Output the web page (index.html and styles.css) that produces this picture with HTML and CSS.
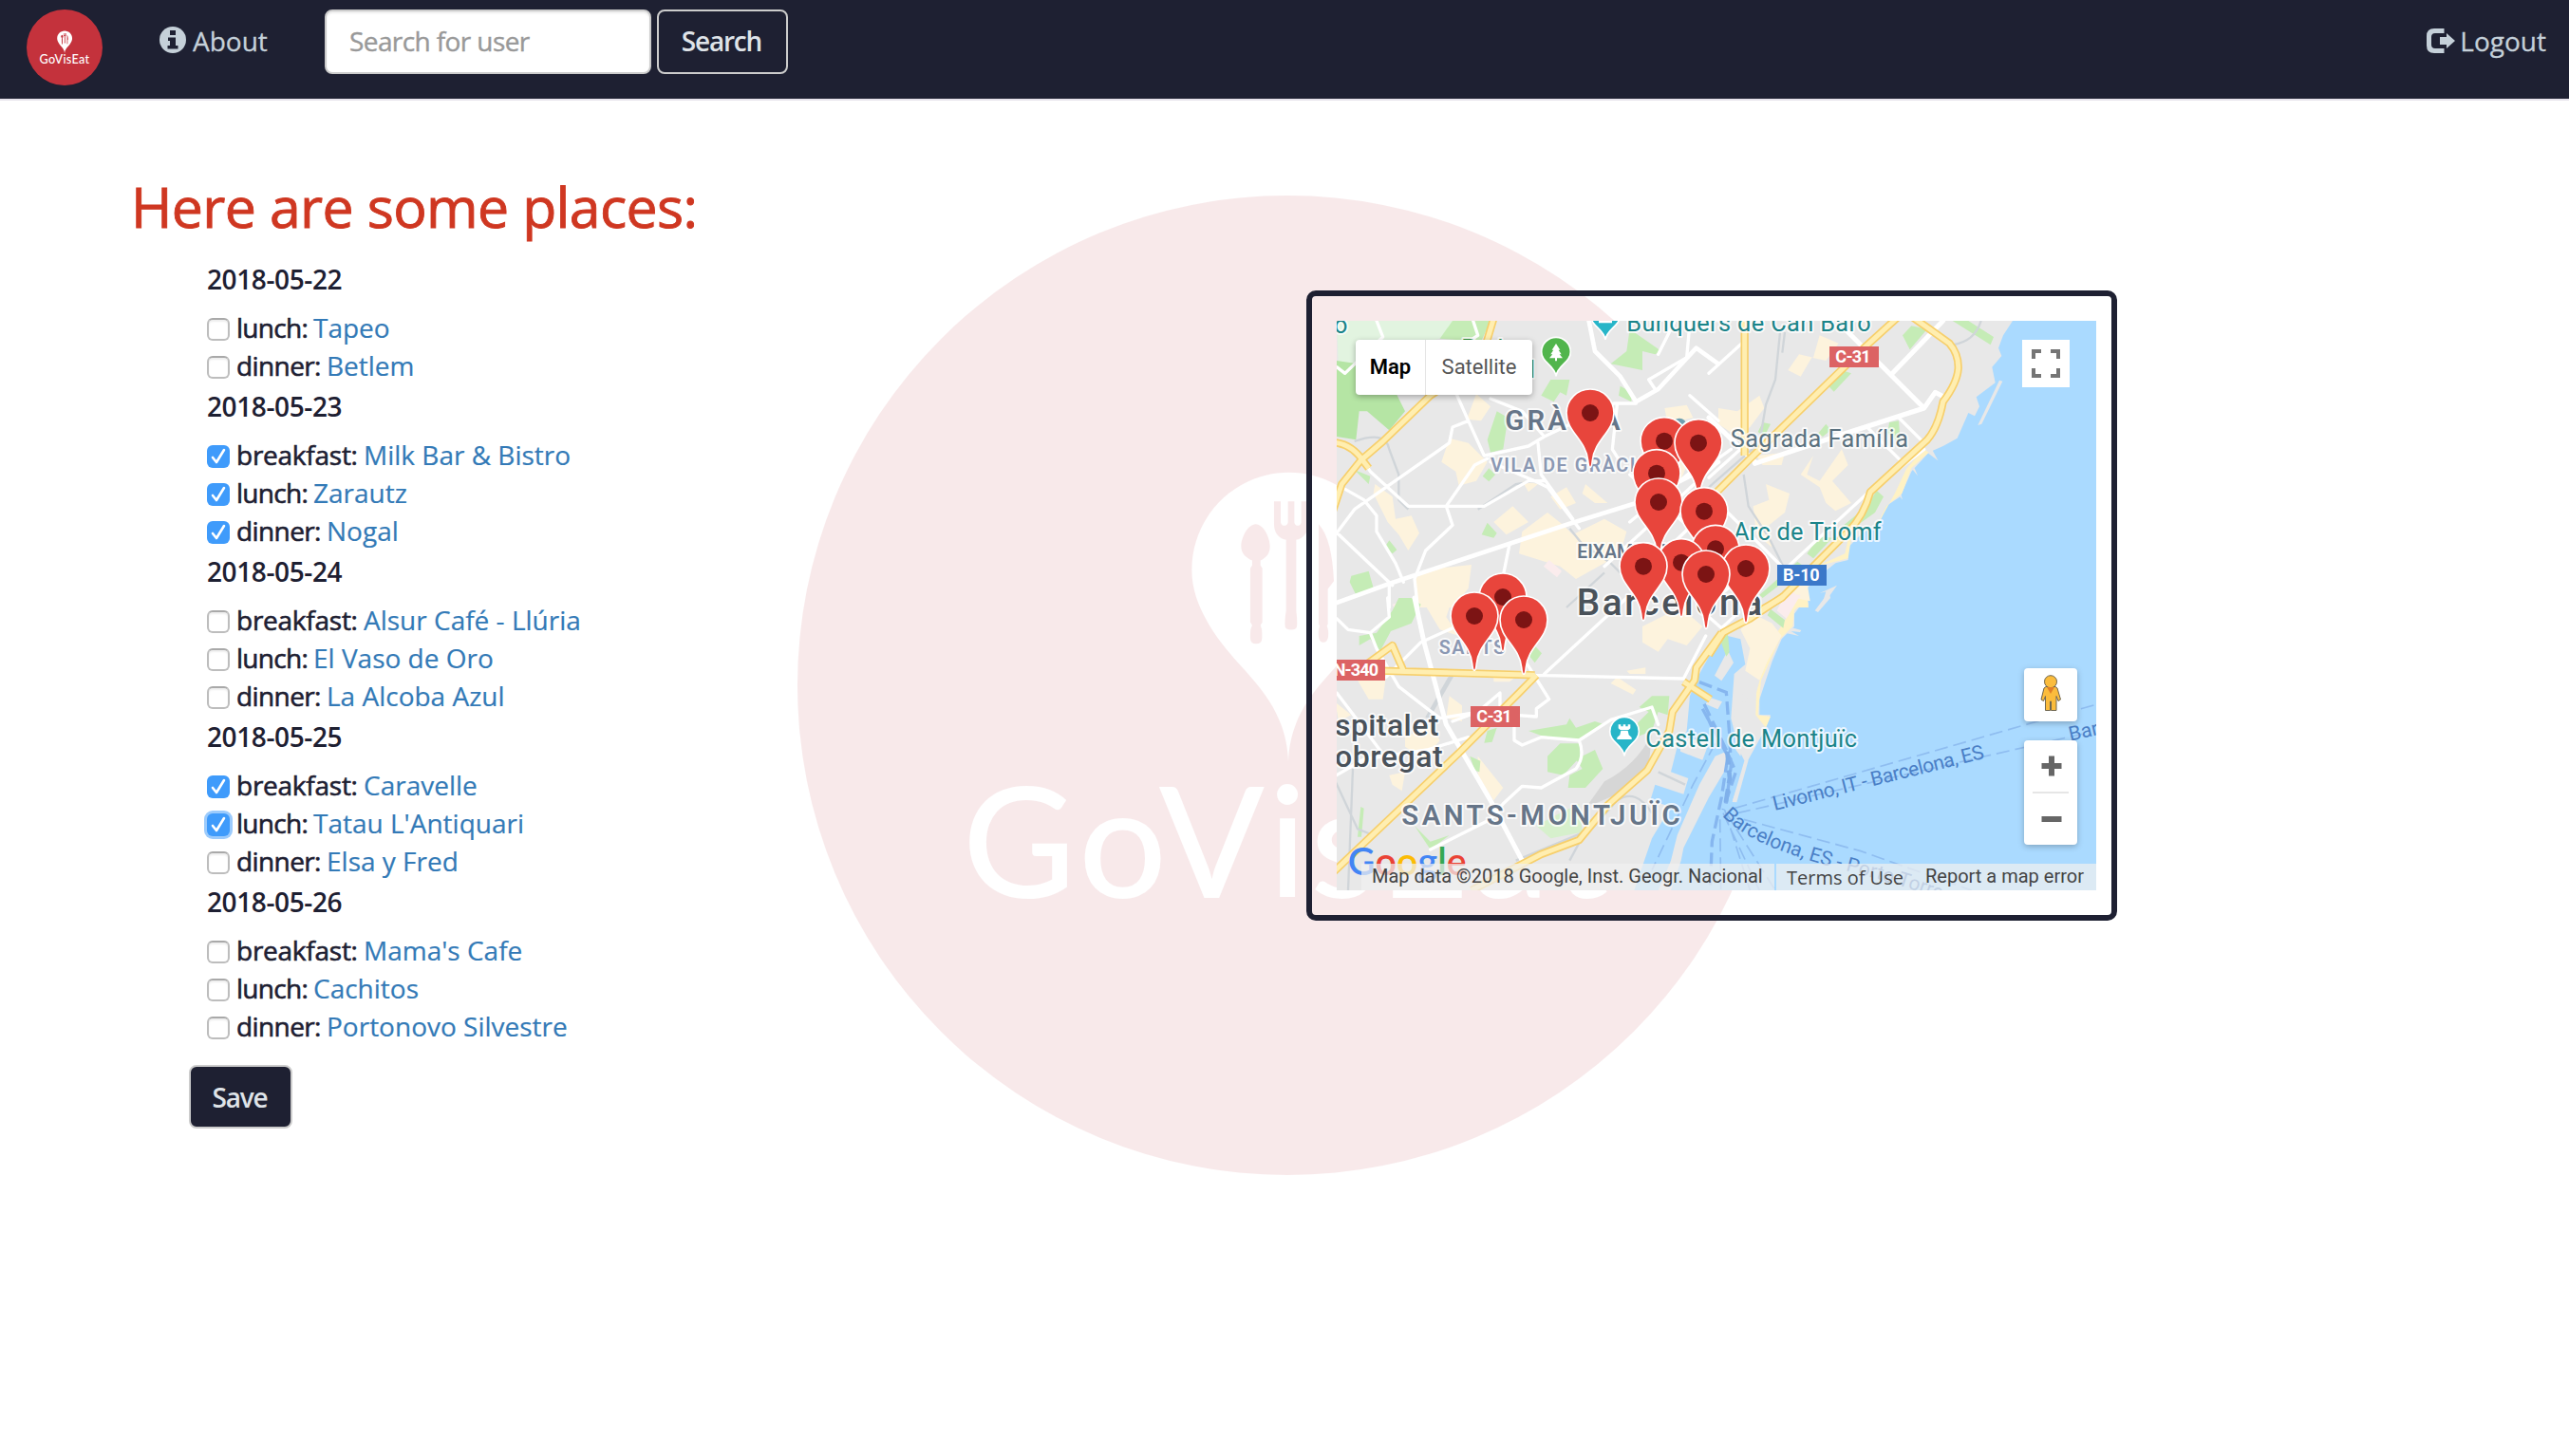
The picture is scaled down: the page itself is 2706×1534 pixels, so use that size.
FILE: index.html
```html
<!DOCTYPE html>
<html lang="en">
<head>
<meta charset="utf-8">
<title>GoVisEat</title>
<link rel="stylesheet" href="styles.css">
</head>
<body>
<svg class="defs" width="0" height="0" aria-hidden="true">
  <defs>
    <symbol id="logo" viewBox="0 0 1032 1032">
      <circle class="logo-disc" cx="516" cy="516" r="516"/>
      <g transform="translate(391 274.500) scale(.33333)">
        <path class="logo-mark" d="M380 52C210 52 73 190 73 360C73 440 110 515 170 595C250 700 370 780 378 965C386 780 510 700 590 595C650 515 687 440 687 360C687 190 550 52 380 52Z"/>
        <g class="logo-disc">
          <path d="M275 215C250 215 229 258 229 285C229 308 245 322 264 330V345L258 355V525L264 535Q258 545 258 560V575Q258 593 276 593Q295 593 295 575V560Q295 545 290 535L296 525V355L290 345V330C308 322 320 308 320 285C320 258 300 215 275 215Z"/>
          <path d="M333 143H354V210Q357 220 365 220Q374 220 377 210V143H397V210Q400 220 408 220Q416 220 419 210V143H440V215Q440 255 403 265V490Q407 520 405 540Q402 549 387 549Q371 549 368 540Q366 520 371 490V265Q333 255 333 215Z"/>
          <path d="M474 215C505 250 518 310 522 395L503 420V530L500 538Q506 550 504 572Q500 589 489 589Q477 589 474 572Q472 550 477 538L474 530Z"/>
        </g>
      </g>
      <text class="logo-mark logo-word" x="174" y="740" textLength="680">GoVisEat</text>
    </symbol>
    <symbol id="pin" viewBox="-80 -80 160 260" overflow="visible">
      <path class="pin-body" d="M0 172C-5 172-6 160-7 150C-14 84-75 60-75 0A75 75 0 0 1 75 0C75 60 14 84 7 150C6 160 5 172 0 172Z"/>
      <circle class="pin-dot" r="27"/>
    </symbol>
  </defs>
</svg>

<header class="navbar">
  <svg class="brand" viewBox="0 0 80 80"><use href="#logo" width="80" height="80"/></svg>
  <a class="nav-link about">
    <svg class="info-icon" viewBox="0 0 28 28"><circle cx="14" cy="14" r="14" fill="#c5d0d9"/><path d="M11 4h6v5h-6zM9 11.500h8v8.500h2.500v3.500h-11V20H11v-5H9z" fill="#1e2032"/></svg>
    <span>About</span>
  </a>
  <form class="search">
    <input class="search-input" type="text" placeholder="Search for user">
    <button class="btn search-btn" type="button">Search</button>
  </form>
  <a class="nav-link logout">
    <svg class="out-icon" viewBox="0 0 30 26"><path d="M18.500 0v5H9Q5 5 5 9v8q0 4 4 4h9.500v5H8Q0 26 0 18V8Q0 0 8 0zM14 9h7V5l9 8-9 8v-4h-7z" fill="#c5d0d9"/></svg>
    <span>Logout</span>
  </a>
</header>

<main class="page">
  <svg class="watermark" viewBox="0 0 1032 1032" aria-hidden="true"><use href="#logo" width="1032" height="1032"/></svg>

  <section class="places">
    <h1 class="title">Here are some places:</h1>
    <form class="plan">
      <h2 class="day">2018-05-22</h2>
      <div class="meal"><span class="box"></span><span class="kind lunch">lunch:</span><a>Tapeo</a></div>
      <div class="meal"><span class="box"></span><span class="kind dinner">dinner:</span><a>Betlem</a></div>
      <h2 class="day">2018-05-23</h2>
      <div class="meal"><span class="box on"><svg viewBox="0 0 24 24"><path d="M6 13l4 5 8-13"/></svg></span><span class="kind breakfast">breakfast:</span><a>Milk Bar &amp; Bistro</a></div>
      <div class="meal"><span class="box on"><svg viewBox="0 0 24 24"><path d="M6 13l4 5 8-13"/></svg></span><span class="kind lunch">lunch:</span><a>Zarautz</a></div>
      <div class="meal"><span class="box on"><svg viewBox="0 0 24 24"><path d="M6 13l4 5 8-13"/></svg></span><span class="kind dinner">dinner:</span><a>Nogal</a></div>
      <h2 class="day">2018-05-24</h2>
      <div class="meal"><span class="box"></span><span class="kind breakfast">breakfast:</span><a>Alsur Café - Llúria</a></div>
      <div class="meal"><span class="box"></span><span class="kind lunch">lunch:</span><a>El Vaso de Oro</a></div>
      <div class="meal"><span class="box"></span><span class="kind dinner">dinner:</span><a>La Alcoba Azul</a></div>
      <h2 class="day">2018-05-25</h2>
      <div class="meal"><span class="box on"><svg viewBox="0 0 24 24"><path d="M6 13l4 5 8-13"/></svg></span><span class="kind breakfast">breakfast:</span><a>Caravelle</a></div>
      <div class="meal"><span class="box on focus"><svg viewBox="0 0 24 24"><path d="M6 13l4 5 8-13"/></svg></span><span class="kind lunch">lunch:</span><a>Tatau L'Antiquari</a></div>
      <div class="meal"><span class="box"></span><span class="kind dinner">dinner:</span><a>Elsa y Fred</a></div>
      <h2 class="day">2018-05-26</h2>
      <div class="meal"><span class="box"></span><span class="kind breakfast">breakfast:</span><a>Mama's Cafe</a></div>
      <div class="meal"><span class="box"></span><span class="kind lunch">lunch:</span><a>Cachitos</a></div>
      <div class="meal"><span class="box"></span><span class="kind dinner">dinner:</span><a>Portonovo Silvestre</a></div>
    </form>
    <button class="btn save" type="button">Save</button>
  </section>

  <section class="map-card">
    <div class="map">
      <svg class="tiles" viewBox="0 0 2400 1800">
        <defs>
          <g id="highways" fill="none">
            <g transform="translate(-114 -114)">
              <path d="M612 100L585 190L530 270L410 350L260 495L190 555L130 630L100 720"/>
              <path d="M100 498Q160 500 200 560L215 580"/>
            </g>
            <g transform="translate(1176 -114)">
              <path d="M113 100V540"/>
              <path d="M640 100L690 135L760 185Q790 220 788 265Q785 310 740 370Q725 450 690 490L510 655Q490 730 440 780L230 990L170 1025"/>
              <path d="M600 100L490 200L130 550L20 660L-70 740"/>
            </g>
            <g transform="translate(-114 876)">
              <path d="M180 230L290 150L325 230M250 230L740 244"/>
              <path d="M745 244L690 300L500 490L100 870"/>
              <path d="M1330 110L1250 220L1245 260L1175 360L1165 420L1095 545L970 655L880 765L760 810L540 924"/>
              <path d="M1210 265L1295 320"/>
            </g>
            <g transform="translate(1176 876)"><path d="M235 -5L130 65Q70 95 45 110L0 180"/></g>
          </g>
        </defs>

        <rect width="2400" height="1800" fill="#e8e8e8"/>

        <!-- sea and harbour -->
        <path fill="#aadaff" d="M2136 0L2106 46L2091 86L2101 111L2071 146L2081 196L2021 241L2031 271L2016 301L1996 291L1961 371L1916 396L1871 416L1816 476L1781 556L1736 586L1716 636L1656 676L1616 716L1616 756L1576 766L1526 806L1486 846L1491 901L1476 886L1446 926L1446 966L1406 1006L1376 1076L1356 1136L1336 1196L1336 1246L1371 1246L1356 1286L1296 1396L1261 1521L1251 1516L1291 1396L1271 1356L1246 1256L1256 1116L1291 1086L1276 1006L1236 996L1206 1006L1141 1126L1116 1186L1106 1296L1076 1346L1056 1426L1111 1446L1096 1496L1006 1466L991 1516L1056 1536L996 1636L940 1800H2400V0Z"/>
        <g transform="translate(996 906)" fill="#e8e8e8">
          <path d="M235 455L246 490L180 600L100 760L92 800L60 894H20L35 860L60 800L80 720L150 560L200 470Z"/>
          <path d="M90 410L180 425L172 450L160 482L140 475L90 455ZM185 285L222 298L208 322L170 305Z"/>
        </g>
        <path transform="translate(-114 876)" fill="#d6d6d6" d="M910 650L960 580Q1060 530 1110 430L1100 530L1000 620L930 650Z"/>
        <g transform="translate(1176 876)" fill="#e8e8e8">
          <path d="M60 165L78 205L40 262L18 245ZM85 250L120 232L125 250L95 262L98 300L124 310L118 330L80 320ZM78 350L120 345L122 365L98 370L92 410L112 440L100 500L85 480Z"/>
          <path d="M112 515L125 512L88 646L74 645Z"/>
          <path d="M380 -20L335 40L345 45L384 0ZM230 85L292 102L288 108L260 105L285 120L240 110Z"/>
        </g>
        <g transform="translate(1176 -114)" fill="#e8e8e8">
          <path d="M918 302L928 305L862 440L850 444ZM690 530L724 556L705 520ZM640 580L660 604L650 580ZM590 650L612 680L605 655ZM350 975L405 950L355 1020L370 970Z"/>
        </g>

        <!-- beaches and built-up areas -->
        <g fill="#fff2c4">
          <path transform="translate(1176 -114)" d="M680 520L695 530L640 580L610 660L560 700L530 765L590 655L625 580ZM445 780L430 850L340 890L440 865L450 800ZM270 1020L310 985L315 1020Z"/>
          <path transform="translate(1176 876)" d="M310 0L270 40L265 90L225 130L165 260L155 370L195 375L180 410L148 370L150 300L190 150L260 40L280 0Z"/>
        </g>
        <g fill="#fdf3dd">
          <g transform="translate(-114 -114)">
            <path d="M470 485L530 500L590 560L555 620L500 635L490 590L445 560ZM555 345L600 385L570 430L525 425ZM235 630L290 670L300 740L350 730L375 785L340 840L310 790L275 750L230 660Z"/>
            <path d="M670 700L720 750L650 790L610 750ZM700 780L780 720L830 760L860 790L960 740L1030 780L1010 850L960 880L870 930L820 890L690 850ZM400 900L540 885L530 960L480 1020H360V930ZM840 640L870 690L820 710L790 670ZM900 630L970 690L930 690L890 660ZM700 620L750 630L720 655ZM1150 390L1220 380L1240 420L1160 440ZM1170 550L1225 560L1200 620Z"/>
          </g>
          <g transform="translate(1176 -114)">
            <path d="M350 160L410 185L370 240L325 230L290 290L250 270L285 220L330 230ZM30 390L90 400L160 350L175 390L130 450L90 480L30 440ZM330 540L310 600L350 620L420 520L440 570L390 620L450 690L400 715L370 690L350 640L290 600ZM180 630L255 660L240 720L190 760L200 830L150 790L140 700L190 680ZM150 540L240 530L230 570H170Z"/>
            <path d="M240 960L310 940L320 1000L270 990Z"/>
          </g>
          <g transform="translate(-114 876)">
            <path d="M380 0L480 0L460 60L500 120L440 100ZM180 260L270 245L260 320H215ZM330 440L410 400L440 450L390 510L330 470ZM470 310L510 340V390L460 380ZM560 500L640 600L610 640L560 560ZM280 560L330 550L320 610L290 590ZM1000 250L1060 290L1050 305L980 270ZM1030 230L1090 220V240H1040ZM1080 90L1200 30L1270 90L1220 150L1160 130L1130 170L1080 140ZM610 240L680 250L660 265H610ZM110 330L160 370L120 390Z"/>
          </g>
          <path transform="translate(1176 876)" d="M140 50L200 80L230 120L185 200L160 260L115 230L130 160L100 100Z"/>
        </g>
        <g fill="#fbeced">
          <path transform="translate(-114 -114)" d="M785 870L825 905L810 925L768 890ZM290 1010L350 990V1020H295Z"/>
          <path transform="translate(1176 876)" d="M240 -10L290 -10L245 65L215 40ZM210 0L250 -30L290 0Z"/>
        </g>

        <!-- parks -->
        <g fill="#c5ecb6">
          <g transform="translate(-114 -114)">
            <path fill="#e2f4e0" d="M114 114H500L470 160L250 230L120 270Z"/>
            <path fill="#b5e5a4" d="M114 240L180 250L300 340L330 400L280 460L210 400L185 400L175 490L114 480Z"/>
            <path d="M480 114H600L570 180L440 170ZM620 400L655 420L640 520L600 530L590 490ZM790 300L850 300L840 350L820 340L800 370L760 350ZM1040 140L1140 210L1120 220L1080 210L1080 270L980 250L1030 210ZM1010 320L1045 340V370L1005 350ZM595 580L615 600L595 622L575 605ZM170 585L220 605L215 630ZM590 752L620 785L610 800L572 790ZM280 808L304 838L290 850L265 830ZM160 920L215 905L232 965L175 980L155 940Z"/>
          </g>
          <g transform="translate(1176 -114)">
            <path d="M770 114H820L900 165L890 190ZM612 160L640 130L690 140L635 205ZM420 270L450 280L395 338L378 320ZM170 435L195 440L175 480L155 465ZM370 440L385 460L360 480L345 470ZM570 435L600 430L605 500L565 470ZM530 650L552 670L525 720L455 770L420 765L500 700ZM350 795L390 800L330 865L310 850ZM280 875L300 890L170 990L160 980Z"/>
          </g>
          <g transform="translate(-114 876)">
            <path d="M350 0L380 20L350 80L285 105L250 170L220 130L185 150V120L240 110L290 40L310 0ZM720 420L840 400L850 380L870 410L930 390L960 400L870 450L760 435ZM1070 345L1110 310L1165 310L1160 370L1130 360L1110 420L1060 440L1030 430L1100 360ZM820 460L880 460L885 500L830 560L780 550V500ZM930 480L955 540L900 600L845 600L850 560L890 540L870 510ZM590 420L620 410L605 455L580 458ZM535 500L568 515L565 550L550 545ZM190 660L200 665L192 755L180 755ZM360 720L410 770L470 750L410 795ZM730 140L762 175L740 205L720 180Z"/>
            <path fill="#d6f0cc" d="M800 690L880 650L890 740L790 760L745 720Z"/>
          </g>
          <path transform="translate(1176 876)" d="M60 115L35 130L55 185L65 170ZM195 35L240 70L235 95L185 55Z"/>
        </g>

        <!-- railways -->
        <g fill="none" stroke="#d0d5d9" stroke-width="7">
          <g transform="translate(-114 -114)">
            <path d="M170 495Q270 460 280 520L310 600V680L340 710M560 710L680 630L740 620M850 770L890 820L980 880L1010 910M960 910L840 1020"/>
          </g>
          <g transform="translate(1176 -114)">
            <path d="M240 150L232 215M225 150L210 300L180 380L160 500L0 640M110 600L125 700L190 800L240 900M860 114Q840 180 770 190"/>
          </g>
          <g transform="translate(-114 876)">
            <path stroke-width="14" d="M480 240L400 380"/>
            <path d="M110 580L180 730L230 750M165 540L150 924M680 830L920 730L1000 640Q1060 600 1110 680M850 830L920 700M1130 550L1215 590"/>
          </g>
        </g>

        <!-- streets -->
        <g fill="none" stroke="#fff" stroke-width="10" stroke-linejoin="round" stroke-linecap="round">
          <g transform="translate(-114 -114)">
            <path stroke-width="14" d="M910 110L930 210L1010 290L1060 370L1130 330L1250 200L1320 250M100 1010L280 945L850 755L1060 690L1320 560"/>
            <path d="M240 114L260 165L140 280L114 260M545 114L560 160L530 180M490 340L530 430L580 540L630 530L720 510L770 480L990 375L1060 375M590 550L550 570L460 700L480 760L395 840L360 930L370 1020M600 360L700 400L770 480M600 560L740 620L780 640L880 770M750 500L760 600L860 740M130 640L200 680L240 730L240 780L300 880L325 940M100 770L290 950M110 790L170 710L470 500L480 450L530 430M200 560L220 590L340 700H580L720 620H770M660 820L640 920M280 940V1020M1230 120L1220 230L1100 300L1120 330M1180 120L1130 220M1230 350L1320 430M1000 380L985 520L1010 560M1040 750L1320 520M1040 600L1220 760M1090 900L1320 680M960 890L1320 560"/>
          </g>
          <g transform="translate(1176 -114)">
            <path stroke-width="15" d="M430 140L680 390L715 340L735 350M680 390L400 480L145 565M0 420L145 560M540 250L575 285L740 114"/>
            <path d="M0 280L110 180M0 610L100 520M500 450L610 560M600 420L680 500M680 520L500 660L240 900M140 800L240 900M0 570L70 520M0 660L200 860"/>
          </g>
          <g transform="translate(-114 876)">
            <path stroke-width="15" d="M360 0L390 140L460 400L600 640L700 830"/>
            <path d="M114 65L150 100L220 110L280 60L275 0M220 110L240 160L310 280L400 350L440 380L630 350V300L560 360L480 390M270 250L380 140L480 95M740 244L1210 255M710 200L785 320L745 350V375L675 370V450L700 465L760 440L880 450L980 385L1110 345L1130 400M880 450Q900 500 870 540L760 600L700 595L640 650M410 795L600 700L640 650M114 300L190 400L250 480M114 560L200 510L400 480L530 440M770 240L1030 0M1210 255L1280 120"/>
          </g>
          <path transform="translate(1176 876)" d="M0 60L40 95L95 45M-10 30L60 -30"/>
        </g>

        <use href="#highways" class="hwy-case"/>
        <use href="#highways" class="hwy-fill"/>

        <!-- ferry lines -->
        <g fill="none" stroke="#8fbdf0" stroke-width="5" stroke-dasharray="42 18">
          <path transform="translate(1176 876)" d="M80 665L1240 332M90 680L1180 430M110 700L480 800L830 924"/>
          <g transform="translate(996 906)">
            <path d="M225 650L340 894M235 650L390 894M215 670L218 894M230 640L310 894M200 430L130 560L0 830"/>
            <path stroke-width="10" stroke="#86b6ef" d="M150 236L235 268L245 400L250 500L235 620M165 305L235 450L265 520L225 640M160 320L240 470L220 600L190 740L184 894M175 345L190 380"/>
            <path stroke-width="14" stroke="#7fb0ea" d="M238 455L246 540L232 625"/>
          </g>
        </g>

        <!-- labels -->
        <g class="label">
          <g class="ferry" transform="translate(1176 876)">
            <text transform="translate(208 672) rotate(-14)" textLength="685">Livorno, IT - Barcelona, ES</text>
            <text transform="translate(1142 452) rotate(-13)">Bar</text>
            <path id="ferry-path" fill="none" stroke="none" d="M42 688C110 760 220 805 420 858S640 920 820 985"/>
            <text><textPath href="#ferry-path">Barcelona, ES - Porto Torres</textPath></text>
          </g>
          <g transform="translate(-114 -114)">
            <text class="poi teal" x="105" y="153">o</text>
            <text class="poi teal" x="1030" y="147" textLength="772">Bunquers de Can Baró</text>
            <text class="poi park" x="508" y="229">Park</text>
            <text class="poi park" x="570" y="294">Güell</text>
            <text class="poi slate" x="1358" y="512" textLength="562">Sagrada Família</text>
            <text class="poi teal" x="1368" y="806" textLength="467">Arc de Triomf</text>
            <text class="district" x="646" y="458" textLength="364">GRÀCIA</text>
            <text class="quarter" x="600" y="590" textLength="502">VILA DE GRÀCIA</text>
            <text class="quarter dark" x="874" y="865" textLength="278">EIXAMPLE</text>
            <text class="city" x="872" y="1044" textLength="586">Barcelona</text>
          </g>
          <g transform="translate(-114 876)">
            <text class="quarter" x="437" y="177" textLength="208">SANTS</text>
            <text class="town" x="108" y="436" textLength="328">spitalet</text>
            <text class="town" x="108" y="533" textLength="341">obregat</text>
            <text class="district" x="319" y="718" textLength="880">SANTS-MONTJUÏC</text>
            <text class="poi teal" x="1090" y="470" textLength="668">Castell de Montjuïc</text>
          </g>
        </g>
        <g class="shield">
          <rect x="1557" y="81" width="156" height="66" fill="#dc6364"/><text x="1576" y="133" textLength="112">C-31</text>
          <rect x="1392" y="771" width="156" height="66" fill="#3b78c9"/><text x="1410" y="823" textLength="116">B-10</text>
          <rect x="423" y="1218" width="156" height="66" fill="#dc6364"/><text x="442" y="1270" textLength="112">C-31</text>
          <rect x="-20" y="1071" width="173" height="66" fill="#dc6364"/><text x="-10" y="1123" textLength="142">N-340</text>
        </g>

        <!-- place pins -->
        <g stroke="#fff" stroke-width="5">
          <path fill="#51b54c" transform="translate(693 99)" d="M0 76C-5 40-46 34-46 -1A46 46 0 0 1 46 -1C46 34 5 40 0 76Z"/>
          <path fill="#27b5c8" transform="translate(849 -16)" d="M0 76C-5 40-46 34-46 -1A46 46 0 0 1 46 -1C46 34 5 40 0 76Z"/>
          <path fill="#27b5c8" transform="translate(909 1299)" d="M0 76C-5 40-46 34-46 -1A46 46 0 0 1 46 -1C46 34 5 40 0 76Z"/>
        </g>
        <path fill="#fff" d="M693 72L706 92H701L710 106H704L714 118H696V127H690V118H672L682 106H676L685 92H680ZM828 0H870V7H828Z"/>
        <path fill="#fff" d="M890 1276h8v6h7v-6h8v6h7v-6h8v12l-6 5h-26l-6-5zM898 1295h22l3 14l9 8v6h-46v-6l9-8z"/>
        <circle cx="1083" cy="330" r="22" fill="#6f9fb0"/>

        <!-- restaurant markers -->
        <g transform="translate(-114 -114)">
          <use href="#pin" x="835" y="325" width="160" height="260"/>
          <use href="#pin" x="1069" y="414" width="160" height="260"/>
          <use href="#pin" x="1177" y="420" width="160" height="260"/>
          <use href="#pin" x="1045" y="516" width="160" height="260"/>
          <use href="#pin" x="1051" y="607" width="160" height="260"/>
          <use href="#pin" x="1195" y="636" width="160" height="260"/>
          <use href="#pin" x="1231" y="755" width="160" height="260"/>
          <use href="#pin" x="1123" y="798" width="160" height="260"/>
          <use href="#pin" x="1003" y="810" width="160" height="260"/>
          <use href="#pin" x="1327" y="817" width="160" height="260"/>
          <use href="#pin" x="1201" y="835" width="160" height="260"/>
          <use href="#pin" x="559" y="907" width="160" height="260"/>
          <use href="#pin" x="469" y="967" width="160" height="260"/>
          <use href="#pin" x="625" y="979" width="160" height="260"/>
        </g>

        <text class="google" x="35" y="1752" textLength="375"><tspan fill="#4285f4">G</tspan><tspan fill="#ea4335">o</tspan><tspan fill="#fbbc05">o</tspan><tspan fill="#4285f4">g</tspan><tspan fill="#34a853">l</tspan><tspan fill="#ea4335">e</tspan></text>
      </svg>

      <div class="map-type"><span class="type active">Map</span><span class="type">Satellite</span></div>
      <div class="control fullscreen"><svg viewBox="0 0 30 30"><path d="M2 10V2H10M20 2H28V10M28 20V28H20M10 28H2V20" fill="none" stroke="#757575" stroke-width="4"/></svg></div>
      <div class="control pegman">
        <svg viewBox="0 0 22 38"><g fill="#fbbc3c" stroke="#6f6650" stroke-width="1"><path d="M6 12.500h10l2 1.500 3.500 12-2.500 1.500-2-5V37.500h-5.500V28h-1v9.500H5.500V22.500l-2 5L1 26l3-12z"/><circle cx="11" cy="7.200" r="6.500"/></g><path d="M7 13h8l-4 7z" fill="#e07f28"/></svg>
      </div>
      <div class="control zoom">
        <svg viewBox="0 0 22 22"><path d="M11 0.500v21M.5 11h21" stroke="#666" stroke-width="6"/></svg>
        <i class="rule"></i>
        <svg viewBox="0 0 22 22"><path d="M.5 11h21" stroke="#666" stroke-width="6"/></svg>
      </div>
      <div class="credits">
        <span class="credit data">Map data ©2018 Google, Inst. Geogr. Nacional</span>
        <span class="credit terms">Terms of Use</span>
        <span class="credit report">Report a map error</span>
      </div>
    </div>
  </section>
</main>
</body>
</html>
```
FILE: styles.css
```css
* { box-sizing: border-box; }

body {
  margin: 0;
  background: #fff;
  color: #1e2032;
  font: 28px/40px "Open Sans", sans-serif;
}

.defs { display: block; }

/* logo */
.logo-disc { fill: #c4323c; }
.logo-mark { fill: #fff; }
.logo-word { font: 500 163px Lato, sans-serif; }

/* navbar */
.navbar {
  display: flex;
  align-items: flex-start;
  height: 106px;
  padding: 10px 24px 0 28px;
  background: #1e2032;
  border-bottom: 2px solid #e7e3ec;
}
.brand { width: 80px; height: 80px; flex: none; }
.nav-link { display: flex; color: #c5d0d9; -webkit-text-stroke: .3px; }
.nav-link span { line-height: 38px; margin-top: 14px; }
.about { margin-left: 60px; width: 174px; gap: 7px; }
.info-icon { width: 28px; height: 28px; margin-top: 18px; }
.logout { margin-left: auto; gap: 5px; }
.out-icon { width: 30px; height: 26px; margin-top: 20px; }

.search { display: flex; gap: 6px; }
.search-input {
  width: 344px;
  height: 68px;
  padding: 0 24px 2px;
  border: 2px solid #ccc;
  border-radius: 8px;
  background: #fff;
  box-shadow: inset 0 2px 2px rgba(0, 0, 0, .075);
  font: 28px "Open Sans", sans-serif;
  letter-spacing: -.6px;
  -webkit-text-stroke: .4px;
}
.search-input::placeholder { color: #999; opacity: 1; }
.btn {
  padding: 0;
  border: 2px solid #ccc;
  border-radius: 8px;
  background: #1e2032;
  color: #dfe3e8;
  font: 600 28px "Open Sans", sans-serif;
  letter-spacing: -1.2px;
}
.search-btn { width: 138px; height: 68px; padding: 0 2px 2px 0; }

/* page */
.page {
  position: relative;
  display: grid;
  grid-template-columns: 1376px 854px;
  align-items: start;
  height: 1428px;
}
.watermark {
  position: absolute;
  z-index: -1;
  left: 839.5px;
  top: 100px;
  width: 1032px;
  height: 1032px;
  opacity: .1;
}

.places { padding: 71px 0 0 138px; }
.title {
  margin: 0;
  color: #cf3721;
  font-size: 59px;
  font-weight: 400;
  line-height: 80px;
  letter-spacing: -.65px;
  -webkit-text-stroke: .9px #cf3721;
}
.plan { padding: 14px 0 0 80px; }
.day {
  margin: 3px 0 11px;
  font-size: 28px;
  font-weight: 600;
  line-height: 40px;
  letter-spacing: -.4px;
}
.meal { display: flex; height: 40px; }
.meal a { color: #337ab7; -webkit-text-stroke: .2px; }
.kind { -webkit-text-stroke: .6px #1e2032; }
.kind.lunch { width: 81px; letter-spacing: -.7px; }
.kind.dinner { width: 95px; letter-spacing: -.6px; }
.kind.breakfast { width: 134px; letter-spacing: -.25px; }
.box {
  width: 24px;
  height: 24px;
  margin: 10px 7px 0 0;
  border: 2px solid #bdbdbd;
  border-top-color: #a9a9a9;
  border-radius: 6px;
  background: #fff;
  box-shadow: inset 0 2px 2px #eee;
}
.box.on { border: 0; background: #3f9bfb; box-shadow: none; }
.box.on svg { display: block; fill: none; stroke: #fff; stroke-width: 2.6; stroke-linecap: round; stroke-linejoin: round; }
.box.focus { box-shadow: 0 0 0 3px #9ccbfc; }
.save { width: 109px; height: 67px; margin: 21px 0 0 61px; padding-right: 2px; }

/* map */
.map-card {
  width: 854px;
  height: 664px;
  margin-top: 200px;
  padding: 26px;
  border: 6px solid #1e2032;
  border-radius: 10px;
}
.map { position: relative; width: 800px; height: 600px; overflow: hidden; font-family: Roboto, sans-serif; }
.tiles { display: block; width: 800px; height: 600px; }

.hwy-case { stroke: #f7cf6b; stroke-width: 25px; stroke-linejoin: round; }
.hwy-fill { stroke: #ffeeb0; stroke-width: 15px; stroke-linejoin: round; }

.label text { paint-order: stroke; stroke: rgba(255, 255, 255, .75); stroke-width: 12px; stroke-linejoin: round; font-family: Roboto, sans-serif; }
.label .ferry text { font-size: 63px; fill: #4a7fc6; stroke: none; }
.poi { font-size: 76px; }
.teal { fill: #1b8489; }
.park { fill: #2f8f3a; }
.slate { fill: #5b7280; }
.district { font-size: 88px; font-weight: 600; fill: #667588; }
.quarter { font-size: 59px; font-weight: 600; fill: #8b98b3; }
.quarter.dark { fill: #667588; }
.city { font-size: 116px; font-weight: 500; fill: #4a525a; }
.town { font-size: 96px; font-weight: 500; fill: #4a525a; }
.shield text { font: 700 54px Roboto, sans-serif; fill: #fff; }
.google { font: 600 118px Lato, sans-serif; }

.pin-body { fill: #e8453c; stroke: #fff; stroke-width: 5px; }
.pin-dot { fill: #7c1414; }

.map-type {
  position: absolute;
  left: 20px;
  top: 20px;
  display: flex;
  border-radius: 4px;
  background: #fff;
  box-shadow: 0 2px 6px rgba(0, 0, 0, .3);
}
.type { width: 112px; height: 58px; color: #565656; font-size: 22px; line-height: 57px; text-align: center; }
.type.active { width: 74px; color: #000; font-weight: 600; border-right: 1px solid #e4e4e4; }

.control { position: absolute; display: flex; align-items: center; justify-content: center; background: #fff; }
.fullscreen { left: 722px; top: 20px; width: 50px; height: 50px; }
.fullscreen svg { width: 30px; height: 30px; }
.pegman, .zoom { left: 724px; width: 56px; border-radius: 4px; box-shadow: 0 2px 6px rgba(0, 0, 0, .25); }
.pegman { top: 366px; height: 56px; }
.pegman svg { width: 22px; height: 38px; margin-bottom: 4px; }
.zoom { top: 442px; height: 110px; flex-direction: column; gap: 16px; }
.zoom svg { width: 22px; height: 22px; margin-left: 2px; }
.rule { width: 38px; height: 2px; background: #e6e6e6; }

.credits {
  position: absolute;
  left: 26px;
  right: 0;
  bottom: 0;
  display: flex;
  gap: 2px;
  height: 28px;
  color: #444;
  font-size: 20px;
  line-height: 27px;
  white-space: nowrap;
}
.credit { background: rgba(240, 240, 240, .72); }
.data { width: 435px; padding-left: 11px; }
.terms { width: 143px; padding-left: 11px; font-family: "Open Sans", sans-serif; line-height: 29px; }
.report { flex: 1; margin-left: -2px; padding-left: 14px; }
```
